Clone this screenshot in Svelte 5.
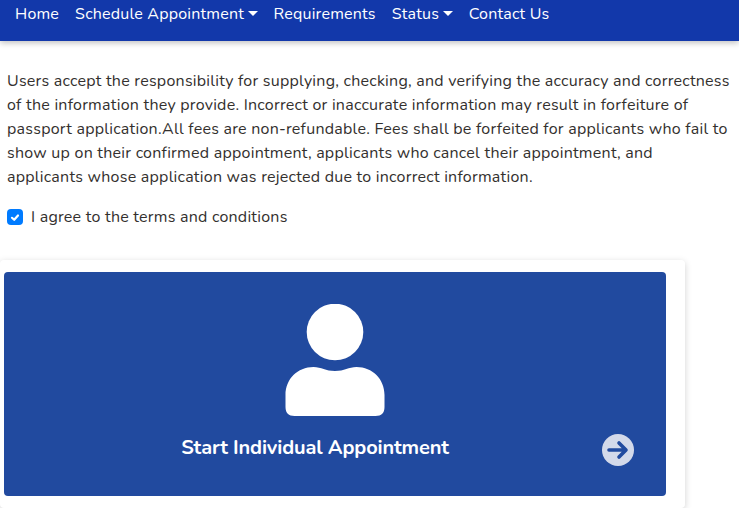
<script>
  const navItems = [
    { label: 'Home' },
    { label: 'Schedule Appointment', caret: true },
    { label: 'Requirements' },
    { label: 'Status', caret: true },
    { label: 'Contact Us' }
  ];
</script>

<nav class="navbar">
  {#each navItems as item}
    <a href="#top" class="nav-link" class:caret={item.caret}>{item.label}</a>
  {/each}
</nav>

<main class="content">
  <p class="terms">
    Users accept the responsibility for supplying, checking, and verifying the accuracy and correctness of the information they provide. Incorrect or inaccurate information may result in forfeiture of passport application.All fees are non-refundable. Fees shall be forfeited for applicants who fail to show up on their confirmed appointment, applicants who cancel their appointment, and applicants whose application was rejected due to incorrect information.
  </p>

  <label class="agree">
    <span class="check">
      <svg viewBox="0 0 16 16" width="16" height="16">
        <path d="M5 8.800l2.200 2L11 6.500" fill="none" stroke="#fff" stroke-width="2.200" stroke-linecap="round" stroke-linejoin="round" />
      </svg>
    </span>
    I agree to the terms and conditions
  </label>

  <div class="card">
    <div class="tile">
      <svg class="person" viewBox="-0.5 0 100 112" width="100" height="112">
        <circle cx="49.500" cy="28" r="28.300" fill="#fff" />
        <path d="M0 103V91c0-16 12-28 28-28 8 0 12 4 21.500 4s13.500-4 21.500-4c16 0 28 12 28 28v12c0 6-3 9-9 9H9c-6 0-9-3-9-9z" fill="#fff" />
      </svg>
      <div class="tile-title">Start Individual Appointment</div>
      <svg class="arrow" viewBox="0 0 32 32" width="32" height="32">
        <circle cx="16" cy="16" r="16" fill="#d3d9ea" />
        <path d="M7 16h16M17 9l7 7-7 7" fill="none" stroke="#214a9f" stroke-width="3.600" stroke-linecap="round" stroke-linejoin="round" />
      </svg>
    </div>
  </div>
</main>

<style>
  :global(body) {
    margin: 0;
    background: #fff;
    font-family: 'Nunito', 'Lato', 'Noto Sans', sans-serif;
    color: #33302e;
    overflow: hidden;
  }

  .navbar {
    display: flex;
    height: 41px;
    padding: 0 7px 13px;
    box-sizing: border-box;
    align-items: center;
    background: #1238aa;
    box-shadow: 0 2px 6px rgba(0, 0, 0, 0.25);
  }

  .nav-link {
    padding: 0 8px;
    color: #fff;
    font-size: 16px;
    letter-spacing: 0.2px;
    text-decoration: none;
    white-space: nowrap;
  }

  .nav-link.caret::after {
    content: '';
    display: inline-block;
    margin-left: 3.500px;
    vertical-align: 3px;
    border-top: 5px solid #fff;
    border-left: 5px solid transparent;
    border-right: 5px solid transparent;
  }

  .content {
    padding: 28px 7px 0 7px;
  }

  .terms {
    margin: 0;
    font-size: 16px;
    line-height: 24px;
    letter-spacing: 0.24px;
  }

  .agree {
    display: flex;
    align-items: center;
    gap: 8px;
    margin-top: 16px;
    font-size: 16px;
    line-height: 24px;
    letter-spacing: 0.23px;
  }

  .check {
    display: flex;
    width: 16px;
    height: 16px;
    border-radius: 4px;
    background: #007bff;
  }

  .card {
    width: 685px;
    margin: 31px 0 0 -7px;
    padding: 12px 19px 12px 4px;
    box-sizing: border-box;
    background: #fff;
    border-radius: 4px;
    box-shadow: 0 2px 7px rgba(0, 0, 0, 0.18);
  }

  .tile {
    position: relative;
    display: flex;
    flex-direction: column;
    align-items: center;
    height: 224px;
    padding-top: 32px;
    box-sizing: border-box;
    background: #214a9f;
    border-radius: 4px;
  }

  .tile-title {
    margin-top: 18px;
    padding-right: 40px;
    color: #fff;
    font-size: 20px;
    font-weight: 700;
    line-height: 28px;
    letter-spacing: -0.15px;
  }

  .arrow {
    position: absolute;
    right: 32px;
    bottom: 30px;
  }
</style>
